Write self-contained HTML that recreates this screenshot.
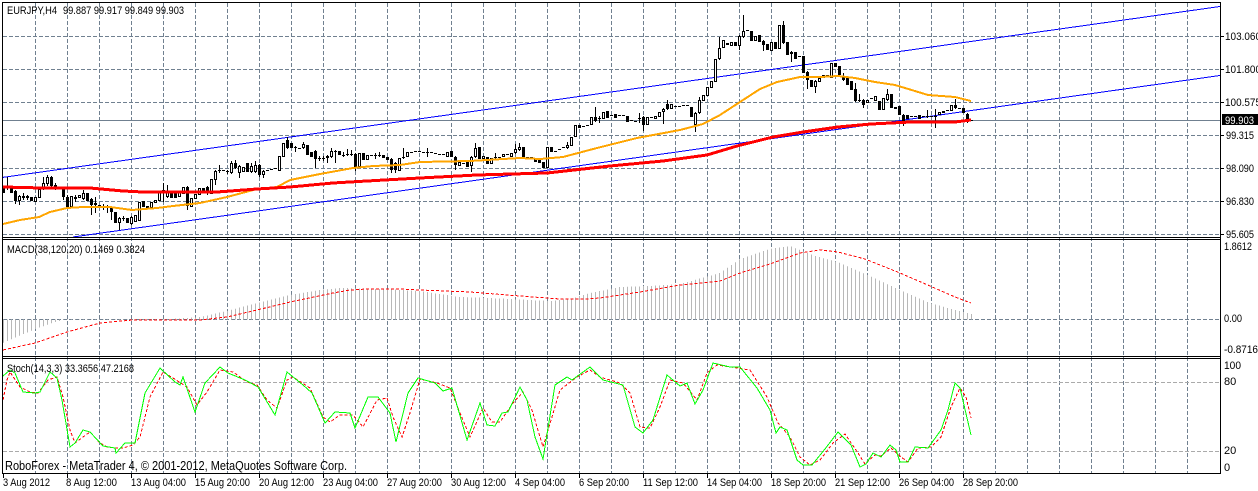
<!DOCTYPE html>
<html><head><meta charset="utf-8"><style>
html,body{margin:0;padding:0;background:#fff;width:1258px;height:491px;overflow:hidden}
svg{display:block}
text{font-family:"Liberation Sans",sans-serif;font-size:11px;fill:#000}
.g{stroke:#708090;stroke-width:1;stroke-dasharray:4 2;fill:none}
.l{stroke:#aaa;stroke-width:1;stroke-dasharray:4 2;fill:none}
.c{shape-rendering:crispEdges;fill:none}
</style></head><body>
<svg width="1258" height="491" viewBox="0 0 1258 491" xmlns="http://www.w3.org/2000/svg">
<defs><pattern id="h" patternUnits="userSpaceOnUse" x="3" y="0" width="4" height="10"><rect width="1" height="10" fill="#b8b8b8" shape-rendering="crispEdges"/></pattern></defs>
<g class="c">
<path class="g" d="M35.5 3V474M67.5 3V474M99.5 3V474M131.5 3V474M163.5 3V474M195.5 3V474M227.5 3V474M259.5 3V474M291.5 3V474M323.5 3V474M355.5 3V474M387.5 3V474M419.5 3V474M451.5 3V474M483.5 3V474M515.5 3V474M547.5 3V474M579.5 3V474M611.5 3V474M643.5 3V474M675.5 3V474M707.5 3V474M739.5 3V474M771.5 3V474M803.5 3V474M835.5 3V474M867.5 3V474M899.5 3V474M931.5 3V474M963.5 3V474M995.5 3V474M1027.5 3V474M1059.5 3V474M1091.5 3V474M1123.5 3V474M1155.5 3V474M1187.5 3V474"/>
<path class="g" d="M3 36.5H1220M3 69.5H1220M3 102.5H1220M3 135.5H1220M3 168.5H1220M3 201.5H1220M3 234.5H1220M3 319.5H1220"/>
<path class="l" d="M3 382.5H1220M3 451.5H1220"/>
<path d="M3 120.5H1220" stroke="#708090"/>
<path d="M2 177.5L1220 6.5M73 237L1220 75.5" stroke="#0000ff"/>
<g transform="translate(.5 0)">
<path stroke="#000" d="M7 177V190M15 190V204M19 195V205M23 193V200M27 195V200M43 177V190M47 175V186M51 176V187M55 183V190M63 187V200M67 195V209M75 195V202M83 190V200M91 198V215M95 197V213M103 204V210M107 205V213M111 206V220M119 217V230M123 216V221M131 216V225M163 183V202M167 185V198M187 186V210M207 186V195M215 170V185M219 165V173M227 170V174M231 161V174M235 160V169M239 165V178M251 163V173M255 161V173M259 164V177M263 170V178M287 137V149M295 146V152M303 142V149M315 150V168M319 156V161M323 156V161M327 155V163M331 148V158M335 150V163M343 152V157M347 149V156M351 150V156M355 153V171M375 153V159M379 152V157M391 158V173M395 162V173M403 148V159M427 148V157M455 156V170M471 156V172M475 143V158M495 153V159M515 144V154M519 143V151M567 142V149M595 107V122M599 116V123M639 113V123M643 116V131M663 108V124M667 100V110M695 112V132M699 97V114M719 37V60M739 35V50M743 15V38M763 40V51M783 21V44M791 51V62M807 71V89M815 80V93M843 73V81M855 83V102M859 94V102M863 99V108M887 89V101M903 114V126M927 110V118M935 109V128M955 99V109M967 113V123"/>
<path stroke="#000" stroke-width="3" d="M3 188V193M7 186V188M11 187V193M15 191V201M19 196V201M23 196V198M27 196V198M31 197V201M35 197V202M39 189V198M43 183V188M47 177V184M51 177V186M55 185V187M59 188V189M63 188V197M67 197V207M71 196V207M75 197V199M79 195V198M83 193V199M87 193V201M91 199V205M95 203V205M99 205V206M103 206V207M107 206V207M111 207V212M115 212V223M119 218V223M123 218V219M127 218V223M131 217V224M135 215V222M139 202V221M143 201V207M147 206V208M151 202V208M155 200V203M159 192V201M163 190V193M167 192V197M171 192V198M175 193V198M179 192V197M183 187V194M187 187V206M191 198V207M195 194V199M199 188V195M203 188V192M207 187V193M211 179V194M215 171V180M219 170V171M223 170V171M227 171V172M231 163V173M235 163V168M239 166V173M243 167V172M247 163V172M251 166V172M255 165V172M259 165V175M263 171V175M267 170V171M271 169V170M275 168V169M279 156V171M283 143V157M287 140V148M291 143V148M295 147V148M299 148V149M303 144V148M307 145V155M311 152V157M315 151V159M319 158V159M323 158V159M327 156V158M331 151V157M335 151V152M339 151V155M343 155V156M347 154V155M351 154V155M355 154V167M359 153V167M363 153V160M367 155V160M371 155V156M375 155V156M379 155V156M383 155V158M387 157V160M391 159V170M395 163V170M399 158V171M403 157V158M407 152V157M411 152V153M415 151V152M419 151V152M423 152V153M427 152V153M431 152V153M435 153V154M439 154V155M443 154V155M447 152V157M451 151V157M455 157V165M459 162V166M463 163V164M467 162V167M471 157V166M475 148V157M479 147V159M483 156V159M487 157V164M491 158V164M495 157V158M499 157V158M503 154V157M507 154V155M511 153V157M515 149V153M519 147V150M523 147V157M527 157V158M531 157V158M535 158V162M539 160V163M543 162V168M547 147V168M551 147V152M555 151V152M559 149V150M563 147V148M567 145V148M571 137V146M575 125V137M579 125V128M583 126V127M587 125V126M591 117V125M595 117V121M599 118V119M603 112V119M607 111V118M611 115V116M615 114V118M619 115V116M623 115V116M627 116V122M631 120V121M635 121V122M639 118V119M643 117V125M647 117V125M651 117V118M655 116V119M659 112V117M663 109V112M667 104V109M671 104V109M675 106V107M679 106V107M683 105V106M687 105V106M691 107V117M695 113V125M699 100V113M703 95V101M707 87V96M711 81V88M715 59V82M719 48V59M723 40V48M727 43V45M731 42V46M735 42V46M739 36V46M743 31V37M747 30V31M751 31V41M755 36V41M759 35V42M763 41V45M767 44V50M771 42V51M775 42V49M779 25V49M783 25V43M787 42V55M791 52V54M795 52V59M799 56V57M803 56V73M807 72V80M811 80V87M815 81V87M819 78V82M823 75V78M827 75V76M831 63V78M835 63V67M839 66V75M843 77V80M847 78V85M851 81V90M855 89V101M859 100V101M863 100V105M867 100V103M871 98V99M875 96V101M879 101V110M883 98V110M887 94V100M891 94V108M895 107V109M899 106V115M903 115V122M907 115V119M911 116V117M915 116V117M919 115V119M923 116V117M927 116V117M931 116V117M935 116V117M939 112V115M943 111V113M947 110V111M951 105V111M955 105V108M959 108V109M963 108V113M967 114V120M971 120V121"/>
<path stroke="#fff" d="M19 197V200M35 198V201M39 190V197M43 184V187M47 178V183M71 197V206M79 196V197M83 194V198M119 219V222M131 218V223M135 216V221M139 203V220M151 203V207M155 201V202M159 193V200M167 193V196M179 193V196M183 188V193M191 199V206M195 195V198M199 189V194M211 180V193M215 172V179M231 164V172M239 167V172M243 168V171M251 167V171M255 166V171M263 172V174M279 157V170M283 144V156M303 145V147M331 152V156M359 154V166M367 156V159M399 159V170M407 153V156M447 153V156M459 163V165M471 158V165M475 149V156M483 157V158M491 159V163M503 155V156M511 154V156M515 150V152M519 148V149M547 148V167M567 146V147M571 138V145M575 126V136M591 118V124M603 113V118M647 118V124M655 117V118M659 113V116M663 110V111M671 105V108M695 114V124M699 101V112M703 96V100M707 88V95M711 82V87M715 60V81M719 49V58M723 41V47M731 43V45M739 37V45M743 32V36M755 37V40M771 43V50M779 26V48M791 53V53M815 82V86M819 79V81M823 76V77M831 64V77M867 101V102M875 97V100M883 99V109M887 95V99M895 108V108M939 113V114M943 112V112M951 106V110"/>
</g>
<path stroke="#ffa500" stroke-width="2" d="M3 224L20 220L39 217L50 212L67 208L83 207L110 207L132 210L157 208L173 206L200 203L227 197L257 189L277 187L290 180L320 174L353 168L373 166L400 165L420 162L470 161L520 158L540 159L563 157L597 148L637 138L680 130L703 124L720 115L740 102L760 89L777 82L800 77L820 77L838 76L855 78L875 82L895 85L905 88L928 95L955 97L971 101"/>
<path stroke="#ff0000" stroke-width="3" d="M3 187L43 188L90 188L123 191L143 192L217 192L257 189L290 187L333 183L367 181L420 178L477 175L547 173L610 166L663 161L707 155L737 146L773 137L803 132L838 127L871 124L911 122L955 122L971 120"/>
<path fill="url(#h)" d="M3 343L33 330L55 322L67 319L170 319L200 317L227 311L257 303L290 295L320 290L340 288L385 289L420 291L460 297L490 298L550 301L570 299L590 293L620 287L650 286L680 284L720 273L740 259L770 249L790 246L815 256L838 262L870 276L900 290L930 303L955 310L972 314V319.5H3Z"/>
<path stroke="#ff0000" stroke-dasharray="3 2" d="M3 350L35 343L67 332L100 323L133 320L200 320L227 317L257 310L290 302L333 293L350 290L367 289L400 289L420 290L470 292L520 296L560 299L587 299L600 298L620 295L640 292L680 285L720 281L740 273L770 264L800 253L820 250L838 252L865 259L900 273L930 286L955 297L971 303"/>
<path stroke="#ff0000" stroke-dasharray="3 2" d="M3 400L7 380L10 372L20 387L30 392L38 393L48 380L57 377L63 397L70 430L75 443L83 437L90 432L100 443L107 447L117 448L123 448L133 445L140 437L150 397L163 372L173 378L187 387L197 405L207 392L220 370L233 372L247 382L257 385L267 400L277 408L287 380L293 377L310 388L323 417L330 422L340 415L353 415L363 427L377 400L387 398L393 417L402 437L410 413L420 379L437 383L450 388L460 413L470 437L483 408L492 422L500 422L513 403L523 392L532 410L543 447L552 417L560 390L577 377L590 370L600 377L620 383L630 393L640 427L650 428L660 407L670 380L683 383L697 400L707 373L717 365L737 368L750 370L767 397L778 423L790 437L800 457L810 465L820 460L833 443L845 434L858 453L865 464L875 455L881 456L891 448L901 457L908 462L918 448L931 447L941 437L951 407L960 388L966 397L971 418"/>
<path stroke="#00ff00" d="M3 376L10 370L15 373L23 392L35 393L40 392L50 372L57 378L62 400L70 447L75 443L83 430L90 432L103 446L115 448L116 453L125 443L135 443L145 393L160 368L175 382L180 385L183 377L195 412L205 383L220 367L228 373L245 380L258 387L275 415L287 372L303 385L312 393L325 423L335 412L350 413L355 428L368 397L378 397L390 413L396 442L408 393L418 378L435 383L443 391L452 388L467 440L480 403L487 425L495 426L502 413L508 412L520 387L527 400L535 437L543 459L555 385L567 377L572 380L590 367L603 380L623 385L635 427L643 433L653 420L667 375L680 386L687 383L695 404L703 390L713 363L730 367L740 367L757 388L770 410L776 433L780 427L787 430L797 460L803 465L812 465L825 449L838 432L851 445L860 467L866 464L873 453L881 457L890 445L896 450L900 462L908 462L915 447L928 448L941 430L948 410L955 383L960 388L971 435"/>
<path stroke="#000" d="M2.5 2V474M2 2.5H1220.5M1220.5 2V474M2 237.5H1220M2 239.5H1220M2 356.5H1220M2 358.5H1220M2 473.5H1220M3.5 474V478M67.5 474V478M131.5 474V478M195.5 474V478M259.5 474V478M323.5 474V478M387.5 474V478M451.5 474V478M515.5 474V478M579.5 474V478M643.5 474V478M707.5 474V478M771.5 474V478M835.5 474V478M899.5 474V478M963.5 474V478M1220 36.5H1224M1220 69.5H1224M1220 102.5H1224M1220 135.5H1224M1220 168.5H1224M1220 201.5H1224M1220 234.5H1224"/>
<rect x="1222" y="114" width="36" height="11" fill="#000"/>
</g>
<text x="7" y="14" textLength="50" lengthAdjust="spacingAndGlyphs">EURJPY,H4</text>
<text x="63" y="14" textLength="121" lengthAdjust="spacingAndGlyphs">99.887 99.917 99.849 99.903</text>
<text x="7" y="253" textLength="138" lengthAdjust="spacingAndGlyphs">MACD(38,120,20) 0.1469 0.3824</text>
<text x="7" y="372" textLength="127" lengthAdjust="spacingAndGlyphs">Stoch(14,3,3) 33.3656 47.2168</text>
<text x="5" y="470" textLength="342" lengthAdjust="spacingAndGlyphs" style="font-size:12.5px">RoboForex - MetaTrader 4, © 2001-2012, MetaQuotes Software Corp.</text>
<text x="1225" y="40" textLength="36" lengthAdjust="spacingAndGlyphs">103.060</text>
<text x="1225" y="73" textLength="36" lengthAdjust="spacingAndGlyphs">101.800</text>
<text x="1225" y="106" textLength="36" lengthAdjust="spacingAndGlyphs">100.575</text>
<text x="1226" y="139" textLength="28" lengthAdjust="spacingAndGlyphs">99.315</text>
<text x="1226" y="172" textLength="28" lengthAdjust="spacingAndGlyphs">98.090</text>
<text x="1226" y="205" textLength="28" lengthAdjust="spacingAndGlyphs">96.830</text>
<text x="1226" y="238" textLength="28" lengthAdjust="spacingAndGlyphs">95.605</text>
<text x="1225" y="124" textLength="29" lengthAdjust="spacingAndGlyphs" style="fill:#fff">99.903</text>
<text x="1224" y="250" textLength="28" lengthAdjust="spacingAndGlyphs">1.8612</text>
<text x="1224" y="322" textLength="18" lengthAdjust="spacingAndGlyphs">0.00</text>
<text x="1224" y="353" textLength="34" lengthAdjust="spacingAndGlyphs">-0.8716</text>
<text x="1224" y="369" textLength="17" lengthAdjust="spacingAndGlyphs">100</text>
<text x="1224" y="385">80</text>
<text x="1224" y="454">20</text>
<text x="1224" y="471">0</text>
<text x="3" y="486" textLength="47" lengthAdjust="spacingAndGlyphs">3 Aug 2012</text>
<text x="66" y="486" textLength="51" lengthAdjust="spacingAndGlyphs">8 Aug 12:00</text>
<text x="131" y="486" textLength="55" lengthAdjust="spacingAndGlyphs">13 Aug 04:00</text>
<text x="195" y="486" textLength="55" lengthAdjust="spacingAndGlyphs">15 Aug 20:00</text>
<text x="259" y="486" textLength="55" lengthAdjust="spacingAndGlyphs">20 Aug 12:00</text>
<text x="323" y="486" textLength="55" lengthAdjust="spacingAndGlyphs">23 Aug 04:00</text>
<text x="387" y="486" textLength="55" lengthAdjust="spacingAndGlyphs">27 Aug 20:00</text>
<text x="451" y="486" textLength="55" lengthAdjust="spacingAndGlyphs">30 Aug 12:00</text>
<text x="515" y="486" textLength="50" lengthAdjust="spacingAndGlyphs">4 Sep 04:00</text>
<text x="579" y="486" textLength="50" lengthAdjust="spacingAndGlyphs">6 Sep 20:00</text>
<text x="643" y="486" textLength="55" lengthAdjust="spacingAndGlyphs">11 Sep 12:00</text>
<text x="707" y="486" textLength="55" lengthAdjust="spacingAndGlyphs">14 Sep 04:00</text>
<text x="771" y="486" textLength="55" lengthAdjust="spacingAndGlyphs">18 Sep 20:00</text>
<text x="835" y="486" textLength="55" lengthAdjust="spacingAndGlyphs">21 Sep 12:00</text>
<text x="899" y="486" textLength="55" lengthAdjust="spacingAndGlyphs">26 Sep 04:00</text>
<text x="963" y="486" textLength="55" lengthAdjust="spacingAndGlyphs">28 Sep 20:00</text>
</svg>
</body></html>
